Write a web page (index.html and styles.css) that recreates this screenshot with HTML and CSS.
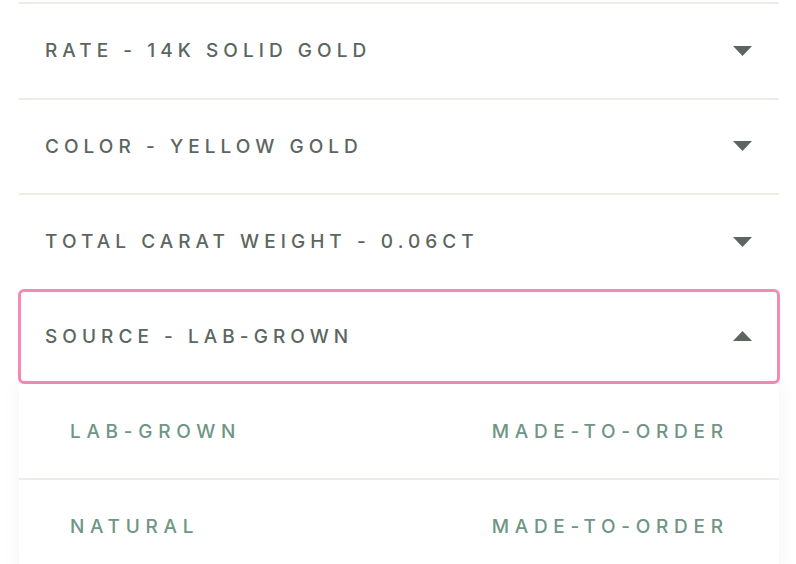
FILE: index.html
```html
<!DOCTYPE html>
<html>
<head>
<meta charset="utf-8">
<link rel="stylesheet" href="styles.css">
</head>
<body>
<div class="accordion">
  <div class="row">
    <span class="label">RATE - 14K SOLID GOLD</span>
    <svg class="caret" width="19" height="10" viewBox="0 0 19 10"><path d="M0 0H19L9.5 10Z"/></svg>
  </div>
  <div class="row">
    <span class="label">COLOR - YELLOW GOLD</span>
    <svg class="caret" width="19" height="10" viewBox="0 0 19 10"><path d="M0 0H19L9.5 10Z"/></svg>
  </div>
  <div class="row">
    <span class="label">TOTAL CARAT WEIGHT - 0.06CT</span>
    <svg class="caret" width="19" height="10" viewBox="0 0 19 10"><path d="M0 0H19L9.5 10Z"/></svg>
  </div>
  <div class="row open">
    <span class="label">SOURCE - LAB-GROWN</span>
    <svg class="caret" width="19" height="10" viewBox="0 0 19 10"><path d="M0 10H19L9.5 0Z"/></svg>
  </div>
  <div class="options">
    <div class="option">
      <span>LAB-GROWN</span>
      <span>MADE-TO-ORDER</span>
    </div>
    <div class="option">
      <span>NATURAL</span>
      <span>MADE-TO-ORDER</span>
    </div>
  </div>
</div>
</body>
</html>
```
FILE: styles.css
```css
html, body {
  margin: 0;
  padding: 0;
  background: #ffffff;
  overflow: hidden;
}
body {
  padding-top: 2px;
  font-family: Inter, "Liberation Sans", Arial, sans-serif;
}
.accordion {
  width: 760px;
  margin-left: 19px;
}
.row {
  box-sizing: border-box;
  height: 95.5px;
  border-top: 2px solid #efebe7;
  display: flex;
  align-items: center;
  justify-content: space-between;
  padding: 0 27px 0 26px;
}
.label {
  font-size: 19px;
  font-weight: 500;
  letter-spacing: 5.05px;
  color: #5b6660;
}
.caret {
  fill: #5b6660;
  display: block;
}
.row.open {
  height: 95.5px;
  margin: 0 -1px;
  border: 3px solid #f58ab6;
  border-radius: 6px;
  padding: 0 25px 0 24px;
}
.options {
  background: #ffffff;
  box-shadow: 0 0 18px rgba(0, 0, 0, 0.05);
}
.option {
  box-sizing: border-box;
  height: 94px;
  display: flex;
  align-items: center;
  justify-content: space-between;
  padding: 0 56px 0 51px;
  font-size: 19px;
  font-weight: 500;
  letter-spacing: 5.7px;
  color: #6f9585;
}
.option span:last-child {
  margin-right: -5.7px;
}
.option + .option {
  border-top: 2px solid #efebe7;
}
```
